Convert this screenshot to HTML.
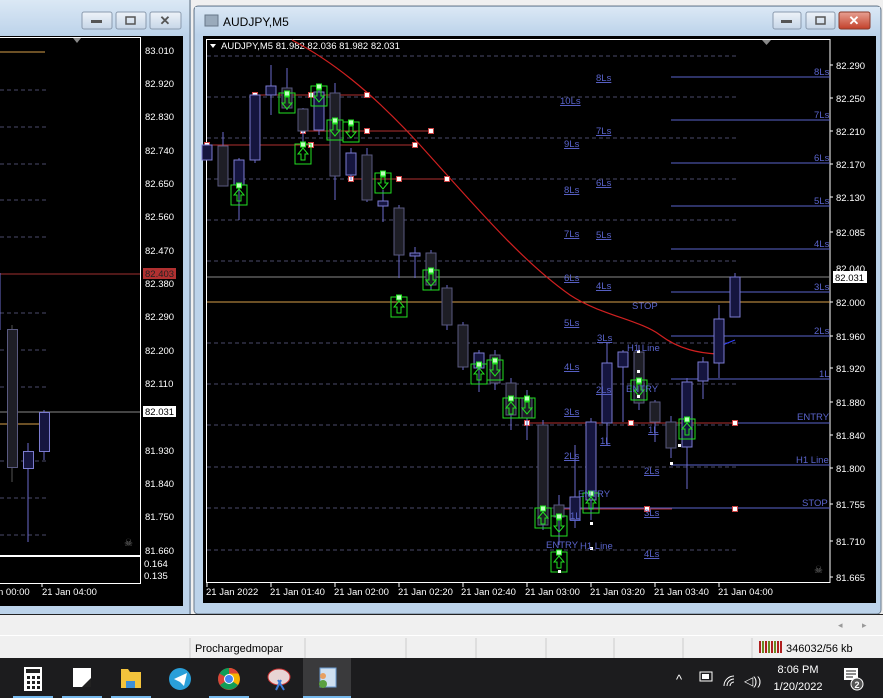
<!DOCTYPE html>
<html><head><meta charset="utf-8"><style>
html,body{margin:0;padding:0;width:883px;height:698px;overflow:hidden;background:#f0f0f0}
svg{display:block}
text{font-family:"Liberation Sans",sans-serif}
</style></head><body>
<svg width="883" height="698" viewBox="0 0 883 698" xmlns="http://www.w3.org/2000/svg">
<defs>
<linearGradient id="tb" x1="0" y1="0" x2="0" y2="1"><stop offset="0" stop-color="#dbe8f5"/><stop offset="1" stop-color="#bcd3ea"/></linearGradient>
<linearGradient id="btn" x1="0" y1="0" x2="0" y2="1"><stop offset="0" stop-color="#eef3f9"/><stop offset="1" stop-color="#c6d6e8"/></linearGradient>
<linearGradient id="cls" x1="0" y1="0" x2="0" y2="1"><stop offset="0" stop-color="#e8a193"/><stop offset="1" stop-color="#c2402a"/></linearGradient>
<g id="up"><rect x="-8" y="0" width="16" height="20" fill="none" stroke="#22e022"/><path d="M0 4 L-5 10 L-2 10 L-2 16 L2 16 L2 10 L5 10 Z" fill="none" stroke="#22e022"/><rect x="-2.5" y="-2" width="5" height="5" fill="#bfffbf" stroke="#22e022"/></g>
<g id="dn"><rect x="-8" y="0" width="16" height="20" fill="none" stroke="#22e022"/><path d="M0 16 L-5 10 L-2 10 L-2 4 L2 4 L2 10 L5 10 Z" fill="none" stroke="#22e022"/><rect x="-2.5" y="-2" width="5" height="5" fill="#bfffbf" stroke="#22e022"/></g>
<rect id="wsq" x="-2.5" y="-2.5" width="5" height="5" fill="#fff" stroke="#c44"/>
</defs>

<rect x="0" y="0" width="883" height="660" fill="#f0f0f0"/>

<!-- LEFT WINDOW -->
<rect x="0" y="0" width="191" height="614" fill="#bcd3ea"/>
<rect x="0" y="0" width="191" height="36" fill="url(#tb)"/>
<line x1="190" y1="0" x2="190" y2="614" stroke="#5a6a7a"/>
<rect x="82" y="12" width="30" height="17" rx="2" fill="url(#btn)" stroke="#8a9aae"/>
<rect x="91" y="20" width="11" height="3" fill="#555"/>
<rect x="116" y="12" width="30" height="17" rx="2" fill="url(#btn)" stroke="#8a9aae"/>
<rect x="126" y="17" width="9" height="7" fill="none" stroke="#555" stroke-width="1.5"/>
<rect x="150" y="12" width="31" height="17" rx="2" fill="url(#btn)" stroke="#8a9aae"/>
<text x="165" y="25" font-size="13" text-anchor="middle" fill="#555" font-weight="bold">✕</text>
<rect x="0" y="36" width="183" height="570" fill="#000"/>
<rect x="-1" y="37.5" width="141.5" height="518" fill="none" stroke="#fff"/>
<rect x="-1" y="556.5" width="141.5" height="27" fill="none" stroke="#fff"/>
<path d="M73 38 L81 38 L77 43 Z" fill="#888"/>
<line x1="0" y1="52" x2="45" y2="52" stroke="#d9a04a"/>
<g stroke="#4a4a6a" stroke-dasharray="4,3">
<line x1="0" y1="90" x2="46" y2="90"/><line x1="0" y1="127" x2="46" y2="127"/><line x1="0" y1="164" x2="46" y2="164"/><line x1="0" y1="200" x2="46" y2="200"/><line x1="0" y1="237" x2="46" y2="237"/><line x1="0" y1="313" x2="46" y2="313"/><line x1="0" y1="350" x2="46" y2="350"/><line x1="0" y1="387" x2="46" y2="387"/><line x1="0" y1="461" x2="46" y2="461"/><line x1="0" y1="498" x2="46" y2="498"/><line x1="0" y1="535" x2="46" y2="535"/>
</g>
<line x1="0" y1="274" x2="140" y2="274" stroke="#a03030"/>
<line x1="0" y1="412" x2="140" y2="412" stroke="#888"/>
<line x1="0" y1="424" x2="40" y2="424" stroke="#d9a04a"/>
<line x1="0" y1="273" x2="0" y2="330" stroke="#6a6acc"/>
<line x1="12" y1="325" x2="12" y2="482" stroke="#555"/>
<rect x="7.5" y="329.5" width="10" height="138" fill="#1e1e26" stroke="#5a5a80"/>
<line x1="28" y1="443" x2="28" y2="542" stroke="#6a6acc"/>
<rect x="23.5" y="451.5" width="10" height="17" fill="#15153f" stroke="#7b7bd0"/>
<line x1="44" y1="410" x2="44" y2="460" stroke="#6a6acc"/>
<rect x="39.5" y="412.5" width="10" height="39" fill="#15153f" stroke="#7b7bd0"/>
<text x="124" y="546" font-size="10" fill="#777">☠</text>
<g font-size="9.5" fill="#fff">
<text x="145" y="54">83.010</text><text x="145" y="87">82.920</text><text x="145" y="120">82.830</text><text x="145" y="154">82.740</text><text x="145" y="187">82.650</text><text x="145" y="220">82.560</text><text x="145" y="254">82.470</text><text x="145" y="287">82.380</text><text x="145" y="320">82.290</text><text x="145" y="354">82.200</text><text x="145" y="387">82.110</text><text x="145" y="454">81.930</text><text x="145" y="487">81.840</text><text x="145" y="520">81.750</text><text x="145" y="554">81.660</text>
<text x="144" y="567">0.164</text><text x="144" y="579">0.135</text>
</g>
<rect x="143" y="268" width="33" height="11" fill="#b03030"/>
<text x="145" y="277" font-size="9.5" fill="#222">82.403</text>
<rect x="143" y="406" width="33" height="11" fill="#fff"/>
<text x="145" y="415" font-size="9.5" fill="#000">82.031</text>
<g font-size="9.5" fill="#fff"><text x="-2" y="595">n 00:00</text><text x="42" y="595">21 Jan 04:00</text></g>
<line x1="42" y1="583" x2="42" y2="587" stroke="#fff"/>

<!-- RIGHT WINDOW -->
<rect x="194" y="6" width="687" height="608" rx="4" fill="#bcd3ea" stroke="#6a7a8a"/>
<rect x="195" y="7" width="685" height="28" fill="url(#tb)"/>
<rect x="205" y="15" width="13" height="11" fill="#9ab" stroke="#678"/>
<text x="223" y="26" font-size="12" fill="#000">AUDJPY,M5</text>
<rect x="773" y="12" width="28" height="17" rx="2" fill="url(#btn)" stroke="#8a9aae"/>
<rect x="781" y="20" width="11" height="3" fill="#555"/>
<rect x="806" y="12" width="29" height="17" rx="2" fill="url(#btn)" stroke="#8a9aae"/>
<rect x="816" y="17" width="9" height="7" fill="none" stroke="#555" stroke-width="1.5"/>
<rect x="839" y="12" width="31" height="17" rx="2" fill="url(#cls)" stroke="#8a3a2a"/>
<text x="854" y="25" font-size="13" text-anchor="middle" fill="#fff" font-weight="bold">✕</text>
<rect x="203" y="36" width="673" height="567" fill="#000"/>
<rect x="206.5" y="39.5" width="623.5" height="543" fill="none" stroke="#fff"/>
<path d="M762 40 L771 40 L766.5 45 Z" fill="#888"/>
<path d="M210 44 L216 44 L213 48 Z" fill="#fff"/>
<text x="221" y="49" font-size="9.5" fill="#fff">AUDJPY,M5  81.982 82.036 81.982 82.031</text>

<g stroke="#4a4a6a" stroke-dasharray="4,3">
<line x1="207" y1="56" x2="736" y2="56"/><line x1="207" y1="97" x2="736" y2="97"/><line x1="207" y1="138" x2="736" y2="138"/><line x1="207" y1="179" x2="736" y2="179"/><line x1="207" y1="220" x2="736" y2="220"/><line x1="207" y1="261" x2="736" y2="261"/><line x1="207" y1="343" x2="736" y2="343"/><line x1="207" y1="384" x2="736" y2="384"/><line x1="207" y1="425" x2="736" y2="425"/><line x1="207" y1="467" x2="736" y2="467"/><line x1="207" y1="508" x2="736" y2="508"/><line x1="207" y1="550" x2="736" y2="550"/>
</g>
<line x1="207" y1="277" x2="830" y2="277" stroke="#888"/>
<line x1="207" y1="302" x2="830" y2="302" stroke="#d9a04a"/>
<g stroke="#5a64cc">
<line x1="671" y1="77" x2="830" y2="77"/><line x1="671" y1="120" x2="830" y2="120"/><line x1="671" y1="163" x2="830" y2="163"/><line x1="671" y1="206" x2="830" y2="206"/><line x1="671" y1="249" x2="830" y2="249"/><line x1="671" y1="292" x2="830" y2="292"/><line x1="671" y1="336" x2="830" y2="336"/><line x1="671" y1="379" x2="830" y2="379"/>
<line x1="540" y1="423" x2="830" y2="423"/><line x1="671" y1="465" x2="830" y2="465"/><line x1="560" y1="508" x2="830" y2="508"/>
</g>
<g stroke="#b03030"><line x1="527" y1="423" x2="735" y2="423"/><line x1="560" y1="509" x2="672" y2="509"/></g>

<path d="M292 40 C330 60 370 90 420 145 C470 200 520 260 570 295 C600 315 640 320 660 335 C680 350 700 353 717 354" fill="none" stroke="#d02020" stroke-width="1.2"/>
<line x1="720" y1="346" x2="735" y2="340" stroke="#3040ff"/>

<g stroke="#b03030">
<line x1="255" y1="95" x2="367" y2="95"/><line x1="303" y1="131" x2="431" y2="131"/><line x1="207" y1="145" x2="415" y2="145"/><line x1="351" y1="179" x2="447" y2="179"/>
</g>
<use href="#wsq" x="255" y="95"/><use href="#wsq" x="311" y="95"/><use href="#wsq" x="367" y="95"/>
<use href="#wsq" x="303" y="131"/><use href="#wsq" x="367" y="131"/><use href="#wsq" x="431" y="131"/>
<use href="#wsq" x="207" y="145"/><use href="#wsq" x="311" y="145"/><use href="#wsq" x="415" y="145"/>
<use href="#wsq" x="351" y="179"/><use href="#wsq" x="399" y="179"/><use href="#wsq" x="447" y="179"/>
<use href="#wsq" x="527" y="423"/><use href="#wsq" x="631" y="423"/><use href="#wsq" x="735" y="423"/>
<use href="#wsq" x="560" y="509"/><use href="#wsq" x="647" y="509"/><use href="#wsq" x="735" y="509"/>

<g stroke="#6a6acc">
<line x1="223" y1="132" x2="223" y2="186"/><line x1="239" y1="158" x2="239" y2="220"/><line x1="255" y1="95" x2="255" y2="163"/><line x1="271" y1="65" x2="271" y2="115"/><line x1="287" y1="68" x2="287" y2="110"/><line x1="303" y1="108" x2="303" y2="145"/><line x1="319" y1="85" x2="319" y2="135"/><line x1="335" y1="83" x2="335" y2="200"/><line x1="351" y1="148" x2="351" y2="180"/><line x1="367" y1="148" x2="367" y2="202"/><line x1="383" y1="190" x2="383" y2="222"/><line x1="399" y1="205" x2="399" y2="278"/><line x1="415" y1="247" x2="415" y2="278"/><line x1="431" y1="250" x2="431" y2="290"/><line x1="447" y1="285" x2="447" y2="330"/><line x1="463" y1="322" x2="463" y2="370"/><line x1="479" y1="350" x2="479" y2="392"/><line x1="495" y1="350" x2="495" y2="390"/><line x1="511" y1="378" x2="511" y2="430"/><line x1="527" y1="390" x2="527" y2="440"/><line x1="543" y1="420" x2="543" y2="530"/><line x1="559" y1="495" x2="559" y2="545"/><line x1="575" y1="445" x2="575" y2="528"/><line x1="591" y1="418" x2="591" y2="520"/><line x1="607" y1="343" x2="607" y2="445"/><line x1="623" y1="350" x2="623" y2="422"/><line x1="639" y1="345" x2="639" y2="410"/><line x1="655" y1="400" x2="655" y2="442"/><line x1="671" y1="416" x2="671" y2="458"/><line x1="687" y1="378" x2="687" y2="489"/><line x1="703" y1="357" x2="703" y2="399"/><line x1="719" y1="305" x2="719" y2="378"/><line x1="735" y1="273" x2="735" y2="317"/>
</g>
<g fill="#15153f" stroke="#7b7bd0">
<rect x="202" y="145" width="10" height="15"/><rect x="234" y="160" width="10" height="25"/><rect x="250" y="95" width="10" height="65"/><rect x="266" y="86" width="10" height="9"/><rect x="314" y="92" width="10" height="38"/><rect x="346" y="153" width="10" height="22"/><rect x="378" y="201" width="10" height="5"/><rect x="410" y="253" width="10" height="3"/><rect x="474" y="353" width="10" height="15"/><rect x="570" y="497" width="10" height="23"/><rect x="586" y="422" width="10" height="78"/><rect x="602" y="363" width="10" height="60"/><rect x="618" y="352" width="10" height="15"/><rect x="682" y="382" width="10" height="65"/><rect x="698" y="362" width="10" height="19"/><rect x="714" y="319" width="10" height="44"/><rect x="730" y="277" width="10" height="40"/>
</g>
<g fill="#1e1e26" stroke="#5a5a80">
<rect x="218" y="146" width="10" height="40"/><rect x="282" y="88" width="10" height="20"/><rect x="298" y="109" width="10" height="22"/><rect x="330" y="93" width="10" height="83"/><rect x="362" y="155" width="10" height="45"/><rect x="394" y="208" width="10" height="47"/><rect x="426" y="253" width="10" height="32"/><rect x="442" y="288" width="10" height="37"/><rect x="458" y="325" width="10" height="42"/><rect x="490" y="355" width="10" height="28"/><rect x="506" y="383" width="10" height="32"/><rect x="522" y="398" width="10" height="20"/><rect x="538" y="425" width="10" height="100"/><rect x="554" y="505" width="10" height="12"/><rect x="634" y="352" width="10" height="51"/><rect x="650" y="402" width="10" height="20"/><rect x="666" y="422" width="10" height="26"/>
</g>

<use href="#up" x="239" y="185"/><use href="#dn" x="287" y="93"/><use href="#up" x="303" y="144"/><use href="#dn" x="319" y="86"/><use href="#dn" x="335" y="120"/><use href="#dn" x="351" y="122"/><use href="#dn" x="383" y="173"/><use href="#up" x="399" y="297"/><use href="#dn" x="431" y="270"/><use href="#up" x="479" y="364"/><use href="#dn" x="495" y="360"/><use href="#up" x="511" y="398"/><use href="#dn" x="527" y="398"/><use href="#up" x="543" y="508"/><use href="#dn" x="559" y="516"/><use href="#up" x="559" y="552"/><use href="#up" x="591" y="493"/><use href="#dn" x="639" y="380"/><use href="#up" x="687" y="419"/>
<g fill="#fff"><rect x="637" y="350" width="3" height="3"/><rect x="637" y="370" width="3" height="3"/><rect x="637" y="395" width="3" height="3"/><rect x="670" y="462" width="3" height="3"/><rect x="678" y="444" width="3" height="3"/><rect x="590" y="522" width="3" height="3"/><rect x="590" y="547" width="3" height="3"/><rect x="558" y="570" width="3" height="3"/></g>

<g font-size="9.5" fill="#5a64cc" text-decoration="underline">
<text x="596" y="81">8Ls</text><text x="560" y="104">10Ls</text><text x="596" y="134">7Ls</text><text x="564" y="147">9Ls</text><text x="596" y="186">6Ls</text><text x="564" y="193">8Ls</text><text x="596" y="238">5Ls</text><text x="564" y="237">7Ls</text><text x="596" y="289">4Ls</text><text x="564" y="281">6Ls</text><text x="564" y="326">5Ls</text><text x="597" y="341">3Ls</text><text x="564" y="370">4Ls</text><text x="596" y="393">2Ls</text><text x="564" y="415">3Ls</text><text x="600" y="444">1L</text><text x="648" y="433">1L</text><text x="564" y="459">2Ls</text><text x="644" y="474">2Ls</text><text x="570" y="519">1L</text><text x="644" y="516">3Ls</text><text x="644" y="557">4Ls</text>
</g>
<g font-size="9.5" fill="#5a64cc">
<text x="632" y="309">STOP</text><text x="627" y="351">H1 Line</text><text x="626" y="392">ENTRY</text><text x="578" y="497">ENTRY</text><text x="546" y="548">ENTRY</text><text x="580" y="549">H1 Line</text>
<text x="814" y="75">8Ls</text><text x="814" y="118">7Ls</text><text x="814" y="161">6Ls</text><text x="814" y="204">5Ls</text><text x="814" y="247">4Ls</text><text x="814" y="290">3Ls</text><text x="814" y="334">2Ls</text><text x="819" y="377">1L</text><text x="797" y="420">ENTRY</text><text x="796" y="463">H1 Line</text><text x="802" y="506">STOP</text>
</g>
<text x="814" y="573" font-size="10" fill="#777">☠</text>

<g font-size="9.5" fill="#fff">
<text x="836" y="69">82.290</text><text x="836" y="102">82.250</text><text x="836" y="135">82.210</text><text x="836" y="168">82.170</text><text x="836" y="201">82.130</text><text x="836" y="236">82.085</text><text x="836" y="272">82.040</text><text x="836" y="306">82.000</text><text x="836" y="340">81.960</text><text x="836" y="372">81.920</text><text x="836" y="406">81.880</text><text x="836" y="439">81.840</text><text x="836" y="472">81.800</text><text x="836" y="508">81.755</text><text x="836" y="545">81.710</text><text x="836" y="581">81.665</text>
</g>
<g stroke="#fff"><line x1="830" y1="65" x2="833" y2="65"/><line x1="830" y1="98" x2="833" y2="98"/><line x1="830" y1="131" x2="833" y2="131"/><line x1="830" y1="164" x2="833" y2="164"/><line x1="830" y1="197" x2="833" y2="197"/><line x1="830" y1="232" x2="833" y2="232"/><line x1="830" y1="302" x2="833" y2="302"/><line x1="830" y1="336" x2="833" y2="336"/><line x1="830" y1="368" x2="833" y2="368"/><line x1="830" y1="402" x2="833" y2="402"/><line x1="830" y1="435" x2="833" y2="435"/><line x1="830" y1="468" x2="833" y2="468"/><line x1="830" y1="504" x2="833" y2="504"/><line x1="830" y1="541" x2="833" y2="541"/><line x1="830" y1="577" x2="833" y2="577"/></g>
<rect x="833" y="271" width="34" height="12" fill="#fff"/>
<text x="835" y="281" font-size="9.5" fill="#000">82.031</text>

<g stroke="#fff"><line x1="207" y1="583" x2="207" y2="587"/><line x1="271" y1="583" x2="271" y2="587"/><line x1="335" y1="583" x2="335" y2="587"/><line x1="399" y1="583" x2="399" y2="587"/><line x1="463" y1="583" x2="463" y2="587"/><line x1="527" y1="583" x2="527" y2="587"/><line x1="591" y1="583" x2="591" y2="587"/><line x1="655" y1="583" x2="655" y2="587"/><line x1="719" y1="583" x2="719" y2="587"/></g>
<g font-size="9.5" fill="#fff">
<text x="206" y="595">21 Jan 2022</text><text x="270" y="595">21 Jan 01:40</text><text x="334" y="595">21 Jan 02:00</text><text x="398" y="595">21 Jan 02:20</text><text x="461" y="595">21 Jan 02:40</text><text x="525" y="595">21 Jan 03:00</text><text x="590" y="595">21 Jan 03:20</text><text x="654" y="595">21 Jan 03:40</text><text x="718" y="595">21 Jan 04:00</text>
</g>

<line x1="0" y1="614.5" x2="883" y2="614.5" stroke="#222"/>
<rect x="0" y="615" width="883" height="20" fill="#f0f0f0"/>
<text x="838" y="628" font-size="9" fill="#999">◂</text><text x="862" y="628" font-size="9" fill="#999">▸</text>
<line x1="0" y1="635.5" x2="883" y2="635.5" stroke="#fff"/>
<rect x="0" y="636" width="883" height="22" fill="#f0f0f0"/>
<g stroke="#ccc"><line x1="190" y1="638" x2="190" y2="658"/><line x1="305" y1="638" x2="305" y2="658"/><line x1="406" y1="638" x2="406" y2="658"/><line x1="476" y1="638" x2="476" y2="658"/><line x1="546" y1="638" x2="546" y2="658"/><line x1="614" y1="638" x2="614" y2="658"/><line x1="683" y1="638" x2="683" y2="658"/><line x1="752" y1="638" x2="752" y2="658"/></g>
<text x="195" y="652" font-size="11" fill="#000">Prochargedmopar</text>
<g>
<rect x="759" y="641" width="2" height="12" fill="#b02020"/><rect x="762" y="641" width="2" height="12" fill="#6a8a20"/><rect x="765" y="641" width="2" height="12" fill="#b02020"/><rect x="768" y="641" width="2" height="12" fill="#6a8a20"/><rect x="771" y="641" width="2" height="12" fill="#b02020"/><rect x="774" y="641" width="2" height="12" fill="#6a8a20"/><rect x="777" y="641" width="2" height="12" fill="#b02020"/><rect x="780" y="641" width="2" height="12" fill="#b02020"/>
</g>
<text x="786" y="652" font-size="11" fill="#000">346032/56 kb</text>

<rect x="0" y="658" width="883" height="40" fill="#1c1c1e"/>
<rect x="303" y="658" width="48" height="40" fill="#3a3a3c"/>
<g fill="#76b9ed"><rect x="13" y="696" width="40" height="2"/><rect x="62" y="696" width="40" height="2"/><rect x="111" y="696" width="40" height="2"/><rect x="209" y="696" width="40" height="2"/><rect x="303" y="696" width="48" height="2"/></g>
<rect x="24" y="667" width="18" height="24" fill="#fff"/><rect x="26" y="669" width="14" height="4" fill="#222"/>
<g fill="#222"><rect x="27" y="676" width="3" height="3"/><rect x="32" y="676" width="3" height="3"/><rect x="37" y="676" width="3" height="3"/><rect x="27" y="681" width="3" height="3"/><rect x="32" y="681" width="3" height="3"/><rect x="37" y="681" width="3" height="3"/><rect x="27" y="686" width="3" height="3"/><rect x="32" y="686" width="3" height="3"/><rect x="37" y="686" width="3" height="3"/></g>
<rect x="73" y="668" width="18" height="19" fill="#fff"/><path d="M82 687 L91 678 L91 687 Z" fill="#222"/>
<path d="M121 669 L128 669 L130 672 L141 672 L141 688 L121 688 Z" fill="#f3c33c"/><rect x="126" y="681" width="9" height="7" fill="#3d8fd8"/>
<circle cx="180" cy="679" r="11" fill="#2a9fd9"/><path d="M174 679 L187 673 L184 686 L180 682 Z" fill="#fff"/>
<circle cx="229" cy="679" r="11" fill="#db4437"/><path d="M229 679 L238 685 A11 11 0 0 1 220 685 Z" fill="#0f9d58"/><path d="M229 679 L220 685 A11 11 0 0 1 229 668 Z" fill="#0f9d58"/><path d="M229 679 L229 668 A11 11 0 0 1 238 685 Z" fill="#f4b400"/><path d="M229 668 A11 11 0 0 1 238.5 673.5 L229 673.5 Z" fill="#db4437"/><path d="M220 685 A11 11 0 0 1 219.5 673.5 L229 679 Z" fill="#db4437"/><circle cx="229" cy="679" r="5" fill="#fff"/><circle cx="229" cy="679" r="4" fill="#4285f4"/>
<ellipse cx="279" cy="677" rx="11" ry="8" fill="#e8d4d4" stroke="#c33"/><path d="M278 680 L284 690 M281 680 L276 690" stroke="#3a7ad8" stroke-width="2"/>
<rect x="320" y="668" width="16" height="19" fill="#cfe0f0" stroke="#6a9ad0"/><circle cx="323" cy="684" r="4" fill="#5aa040"/><circle cx="323" cy="676" r="3" fill="#e8a060"/>
<text x="676" y="684" font-size="13" fill="#fff">^</text>
<rect x="700" y="672" width="12" height="9" fill="none" stroke="#fff"/><rect x="702" y="674" width="7" height="5" fill="#fff"/>
<path d="M724 686 A10 10 0 0 1 734 676 M727 686 A7 7 0 0 1 734 679 M730 686 A4 4 0 0 1 734 682" fill="none" stroke="#fff"/>
<text x="744" y="685" font-size="12" fill="#fff">◁))</text>
<text x="798" y="673" font-size="11" text-anchor="middle" fill="#fff">8:06 PM</text>
<text x="798" y="690" font-size="11" text-anchor="middle" fill="#fff">1/20/2022</text>
<rect x="844" y="668" width="14" height="12" fill="#fff"/><path d="M846 671 H856 M846 674 H856 M846 677 H853" stroke="#1c1c1e"/>
<circle cx="857" cy="684" r="6" fill="#555" stroke="#fff"/><text x="857" y="688" font-size="9" text-anchor="middle" fill="#fff" font-weight="bold">2</text>
</svg>
</body></html>
